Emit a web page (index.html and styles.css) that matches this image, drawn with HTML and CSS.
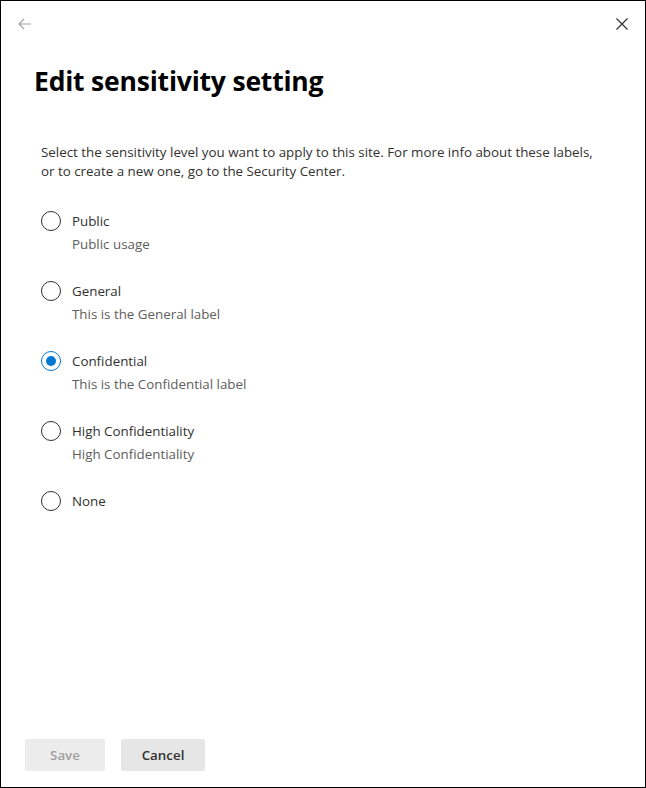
FILE: index.html
```html
<!DOCTYPE html>
<html lang="en">
<head>
<meta charset="utf-8">
<title>Edit sensitivity setting</title>
<link rel="stylesheet" href="styles.css">
</head>
<body>
<div class="panel">
  <div class="topbar">
    <button class="icon-btn back" aria-label="Back">
      <svg width="14" height="12" viewBox="0 0 14 12"><path d="M6 1 L1 6 L6 11 M1 6 H13" fill="none" stroke="#a19f9d" stroke-width="1.1"/></svg>
    </button>
    <button class="icon-btn close" aria-label="Close">
      <svg width="12" height="12" viewBox="0 0 12 12"><path d="M0.5 0.5 L11.5 11.5 M11.5 0.5 L0.5 11.5" fill="none" stroke="#323130" stroke-width="1.2"/></svg>
    </button>
  </div>
  <h1 class="title">Edit sensitivity setting</h1>
  <div class="content">
    <p class="desc">Select the sensitivity level you want to apply to this site. For more info about these labels, or to create a new one, go to the Security Center.</p>
    <div class="options">
      <label class="option">
        <span class="radio"></span>
        <span class="text"><span class="label">Public</span><span class="sub">Public usage</span></span>
      </label>
      <label class="option">
        <span class="radio"></span>
        <span class="text"><span class="label">General</span><span class="sub">This is the General label</span></span>
      </label>
      <label class="option">
        <span class="radio checked"></span>
        <span class="text"><span class="label">Confidential</span><span class="sub">This is the Confidential label</span></span>
      </label>
      <label class="option">
        <span class="radio"></span>
        <span class="text"><span class="label">High Confidentiality</span><span class="sub">High Confidentiality</span></span>
      </label>
      <label class="option">
        <span class="radio"></span>
        <span class="text"><span class="label">None</span></span>
      </label>
    </div>
  </div>
  <div class="footer">
    <button class="btn disabled">Save</button>
    <button class="btn">Cancel</button>
  </div>
</div>
</body>
</html>
```
FILE: styles.css
```css
* { box-sizing: border-box; }
html, body { margin: 0; padding: 0; }
body {
  font-family: "Open Sans", "Noto Sans", sans-serif;
  color: #323130;
  background: #fff;
}
.panel {
  width: 646px;
  height: 788px;
  border: 1px solid #000;
  display: flex;
  flex-direction: column;
}
.topbar {
  display: flex;
  justify-content: space-between;
  align-items: center;
  height: 44px;
  padding: 0 15px 0 16px;
}
.icon-btn {
  border: 0;
  background: none;
  padding: 0;
  width: 16px;
  height: 16px;
  display: flex;
  align-items: center;
  justify-content: center;
}
.back { margin-top: 2px; }
.close { margin-top: 2px; }
.title {
  margin: 18px 0 0 33px;
  font-size: 26.5px;
  font-weight: 700;
  color: #000;
  line-height: 36px;
  letter-spacing: -0.2px;
}
.content {
  flex: 1;
  padding: 0 40px;
}
.desc {
  margin: 44px 0 0 0;
  max-width: 560px;
  font-size: 13.35px;
  line-height: 18.5px;
  color: #323130;
}
.options {
  margin-top: 31px;
  display: flex;
  flex-direction: column;
}
.option {
  display: flex;
  align-items: flex-start;
  height: 70px;
}
.radio {
  width: 20px;
  height: 20px;
  border: 1px solid #323130;
  border-radius: 50%;
  flex: none;
  display: flex;
  align-items: center;
  justify-content: center;
}
.radio.checked {
  border-color: #0078d4;
}
.radio.checked::after {
  content: "";
  width: 10px;
  height: 10px;
  border-radius: 50%;
  background: #0078d4;
}
.text {
  display: flex;
  flex-direction: column;
  margin-left: 11px;
}
.label {
  font-size: 13.35px;
  line-height: 20px;
}
.sub {
  font-size: 13.35px;
  line-height: 20px;
  margin-top: 3px;
  color: #605e5c;
}
.footer {
  display: flex;
  gap: 16px;
  padding: 0 0 16px 24px;
}
.btn {
  width: 80px;
  height: 32px;
  border: 0;
  border-radius: 2px;
  background: #e6e6e6;
  color: #323130;
  font-family: "Open Sans", "Noto Sans", sans-serif;
  font-size: 13.35px;
  font-weight: 600;
  padding: 0;
}
.btn:last-child { width: 84px; }
.btn.disabled {
  background: #ececec;
  color: #a19f9d;
}
```
